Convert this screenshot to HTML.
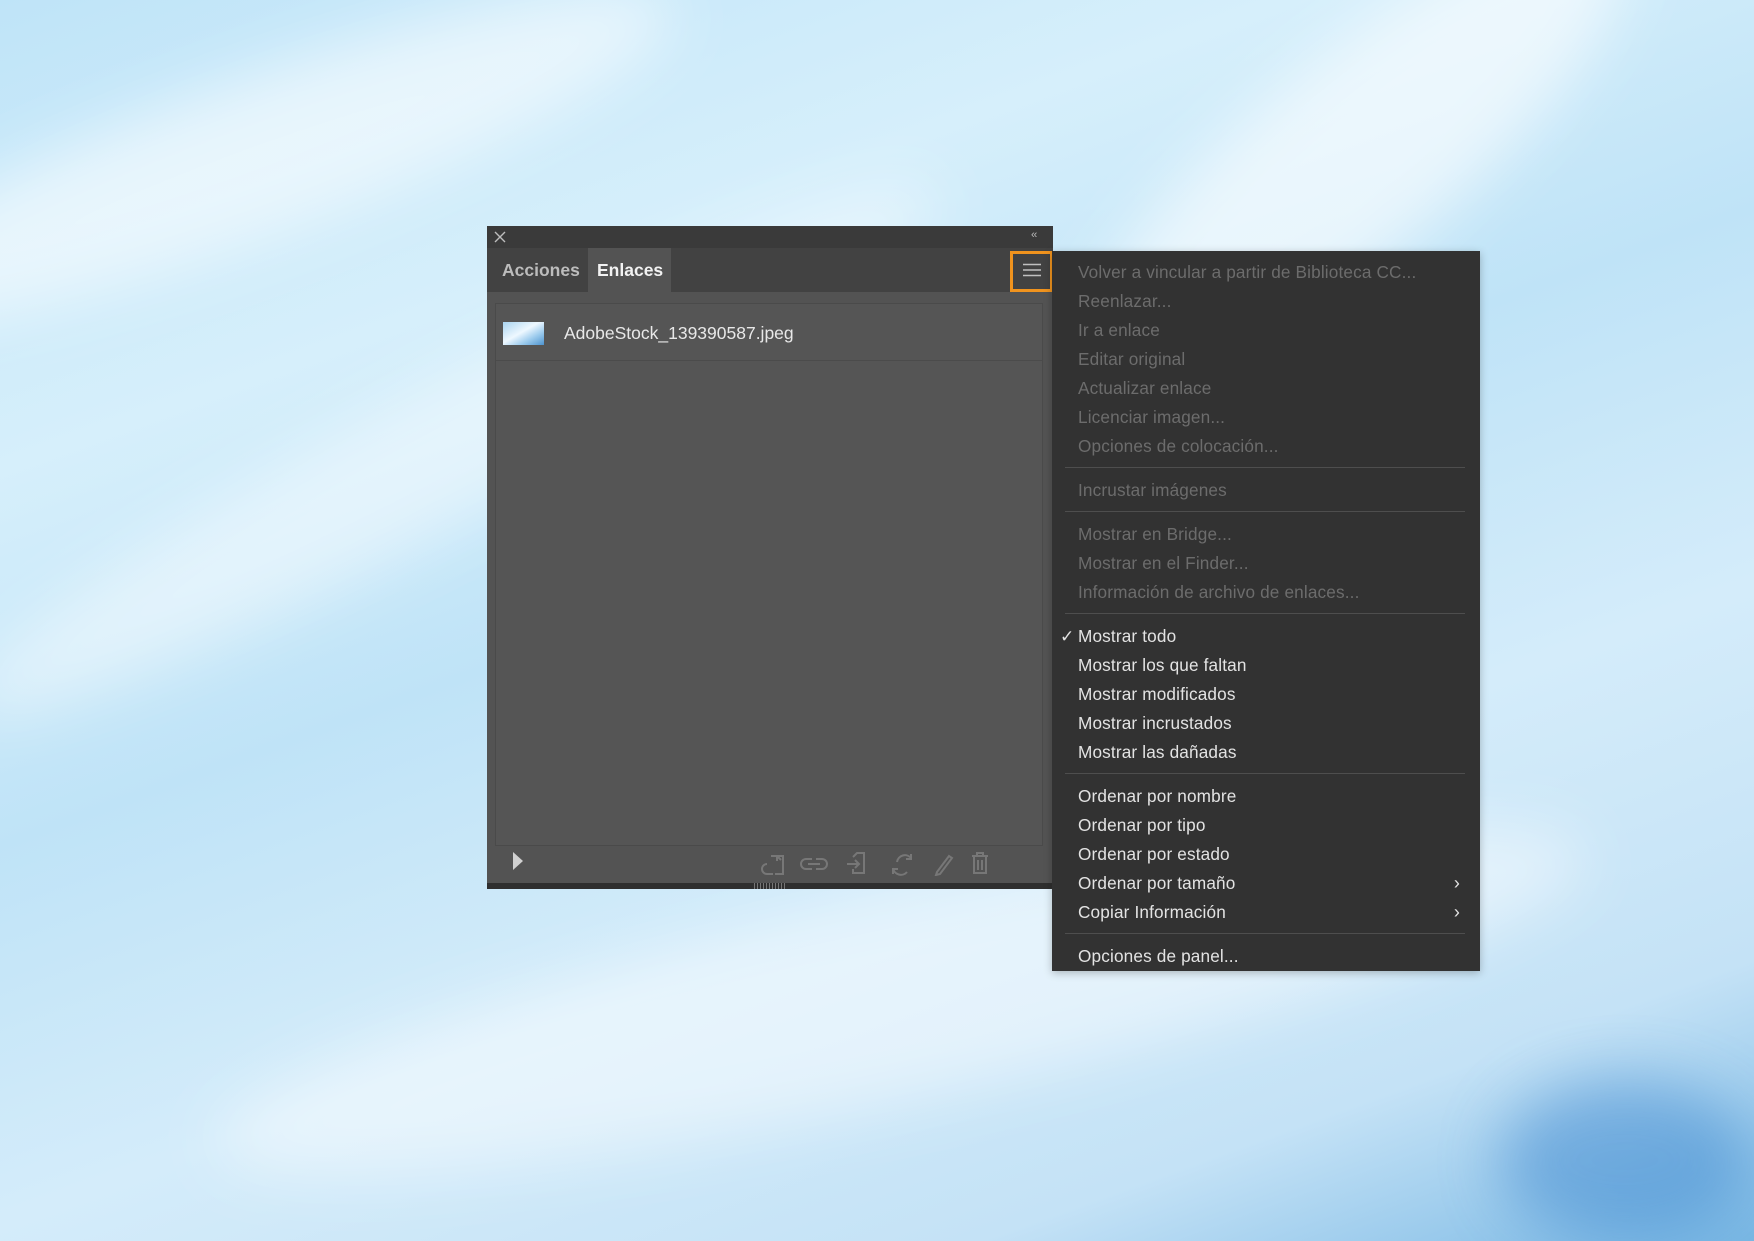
<!DOCTYPE html>
<html><head><meta charset="utf-8"><style>
*{margin:0;padding:0;box-sizing:border-box}
html,body{width:1754px;height:1241px;overflow:hidden}
body{position:relative;font-family:"Liberation Sans",sans-serif;
background:linear-gradient(160deg,#bfe4f8 0%,#d6effb 25%,#bfe3f7 45%,#d4ecfa 65%,#c4e2f6 85%,#7ab8e4 100%);}
.bg{position:absolute;left:0;top:0;width:1754px;height:1241px;overflow:hidden}
.streak{position:absolute;border-radius:50%;filter:blur(30px);}
.abs{position:absolute}
.panel{position:absolute;left:487px;top:226px;width:566px;height:663px;background:#535353}
.title{position:absolute;left:0;top:0;width:566px;height:22px;background:#3a3a3a}
.tabs{position:absolute;left:0;top:22px;width:566px;height:44px;background:#424242}
.tab{position:absolute;top:0;height:44px;line-height:44px;font-weight:bold;font-size:17.5px}
.list{position:absolute;left:8px;top:77px;width:548px;height:543px;border:1px solid #4a4a4a;background:#555}
.menu{position:absolute;left:1052px;top:251px;width:428px;height:720px;background:#323232;padding-top:7px;box-shadow:0 2px 8px rgba(0,0,0,.25)}
.it{height:29px;line-height:29px;padding-left:26px;font-size:17.2px;letter-spacing:0.15px;color:#e3e3e3;position:relative;font-family:"Liberation Sans",sans-serif}
.it.d{color:#6c6c6c}
.sep{height:15px;position:relative}
.sep:after{content:"";position:absolute;left:13px;right:15px;top:6px;border-top:1px solid #4e4e4e}
.arr{position:absolute;right:20px;top:0;font-size:18px}
</style></head><body>
<div class="bg">
<div class="streak" style="left:-200px;top:80px;width:900px;height:160px;background:rgba(255,255,255,.55);transform:rotate(-20deg)"></div>
<div class="streak" style="left:-100px;top:380px;width:1100px;height:140px;background:rgba(255,255,255,.45);transform:rotate(-28deg)"></div>
<div class="streak" style="left:1000px;top:60px;width:700px;height:200px;background:rgba(255,255,255,.6);transform:rotate(-40deg)"></div>
<div class="streak" style="left:200px;top:900px;width:1400px;height:200px;background:rgba(255,255,255,.45);transform:rotate(-12deg)"></div>
<div class="streak" style="left:1500px;top:1080px;width:250px;height:160px;background:rgba(40,120,200,.4)"></div>
</div>

<div class="panel">
 <div class="title">
  <svg class="abs" style="left:7px;top:5px" width="12" height="12"><path d="M1 1L11 11M11 1L1 11" stroke="#bdbdbd" stroke-width="1.4"/></svg>
  <div class="abs" style="left:544px;top:3px;font-size:11px;color:#bbb;letter-spacing:-1px">‹‹</div>
 </div>
 <div class="tabs">
  <div class="tab" style="left:15px;color:#bcbcbc">Acciones</div>
  <div class="tab" style="left:101px;width:83px;background:#535353;color:#f2f2f2;padding-left:9px">Enlaces</div>
  <div class="abs" style="left:523px;top:3px;width:43px;height:41px;border:3px solid #f0931e"></div>
  <svg class="abs" style="left:536px;top:15px" width="18" height="14"><path d="M0 1.5H18M0 7H18M0 12.5H18" stroke="#c0c0c0" stroke-width="1.5"/></svg>
 </div>
 <div class="list">
  <div class="abs" style="left:7px;top:18px;width:41px;height:23px;background:linear-gradient(150deg,#a9d4f0,#eef8ff 45%,#9fcdee 70%,#4d93cf)"></div>
  <div class="abs" style="left:68px;top:19px;font-size:17.5px;color:#e8e8e8">AdobeStock_139390587.jpeg</div>
  <div class="abs" style="left:0;top:56px;width:546px;border-top:1px solid #4b4b4b"></div>
 </div>
 <svg class="abs" style="left:24px;top:625px" width="14" height="20"><path d="M2 1L12 10L2 19Z" fill="#d0d0d0"/></svg>
 <svg class="abs" style="left:270px;top:622px" width="260" height="28" fill="none" stroke="#777" stroke-width="2">
  <path d="M10 16a5 5 0 0 0 0 10h6M14 8h12v18h-8M20 8v5M24 12l-4-4"/>
  <path d="M55 11h-6a5 5 0 0 0 0 10h6M59 11h6a5 5 0 0 1 0 10h-6M51 16h12"/>
  <path d="M90 16h12M98 12l4 4-4 4M96 9l4-4h7v20h-11v-4"/>
  <path d="M154 10a8 8 0 0 0-14 4M136 20a8 8 0 0 0 14 4M154 6v5h-5M136 26v-5h5"/>
  <path d="M180 24l12-16 3 2-12 16-4 1z"/>
  <path d="M215 8h16M220 8V5h6v3M217 9v16h12V9M221 12v10M225 12v10"/>
 </svg>
 <div class="abs" style="left:0;top:657px;width:566px;height:6px;background:#2f2f2f"></div>
 <div class="abs" style="left:267px;top:657px;width:32px;height:6px;background:repeating-linear-gradient(90deg,#777 0 1px,transparent 1px 3px)"></div>
</div>

<div class="menu">
 <div class="it d">Volver a vincular a partir de Biblioteca CC...</div>
 <div class="it d">Reenlazar...</div>
 <div class="it d">Ir a enlace</div>
 <div class="it d">Editar original</div>
 <div class="it d">Actualizar enlace</div>
 <div class="it d">Licenciar imagen...</div>
 <div class="it d">Opciones de colocación...</div>
 <div class="sep"></div>
 <div class="it d">Incrustar imágenes</div>
 <div class="sep"></div>
 <div class="it d">Mostrar en Bridge...</div>
 <div class="it d">Mostrar en el Finder...</div>
 <div class="it d">Información de archivo de enlaces...</div>
 <div class="sep"></div>
 <div class="it"><span class="abs" style="left:8px;top:0">✓</span>Mostrar todo</div>
 <div class="it">Mostrar los que faltan</div>
 <div class="it">Mostrar modificados</div>
 <div class="it">Mostrar incrustados</div>
 <div class="it">Mostrar las dañadas</div>
 <div class="sep"></div>
 <div class="it">Ordenar por nombre</div>
 <div class="it">Ordenar por tipo</div>
 <div class="it">Ordenar por estado</div>
 <div class="it">Ordenar por tamaño<span class="arr">›</span></div>
 <div class="it">Copiar Información<span class="arr">›</span></div>
 <div class="sep"></div>
 <div class="it">Opciones de panel...</div>
</div>
</body></html>
